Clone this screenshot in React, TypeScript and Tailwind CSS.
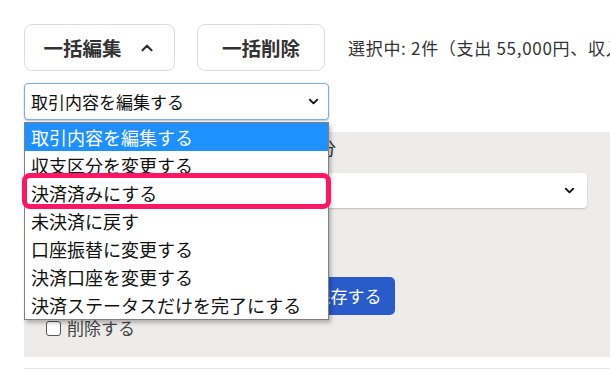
import React from 'react';
import { ChevronUp, ChevronDown } from 'lucide-react';

const FONT = '"Noto Sans CJK JP", "Noto Sans", sans-serif';

// 一括編集メニューの選択肢
const OPTIONS = [
  '取引内容を編集する',
  '収支区分を変更する',
  '決済済みにする',
  '未決済に戻す',
  '口座振替に変更する',
  '決済口座を変更する',
  '決済ステータスだけを完了にする',
];

export default function App() {
  return (
    <div
      className="relative w-[610px] h-[370px] overflow-hidden bg-white text-[#212529] pl-6 pt-6"
      style={{ fontFamily: FONT }}
    >
      {/* ボタン行 */}
      <div className="flex items-center whitespace-nowrap">
        <button className="shrink-0 flex items-center justify-center gap-[16px] w-[151px] h-[47px] border border-[#dcdcdc] rounded-[8px] bg-white text-[19.5px] font-bold text-[#333]">
          一括編集
          <ChevronUp size={18} strokeWidth={3} />
        </button>
        <button className="shrink-0 ml-[22px] w-[128px] h-[47px] border border-[#dcdcdc] rounded-[8px] bg-white text-[19.5px] font-bold text-[#333]">
          一括削除
        </button>
        <span className="shrink-0 ml-[23px] text-[17px] tracking-[0.7px] text-[#333]">選択中: 2件（支出 55,000円、収入 0円）</span>
      </div>

      {/* アクション選択 */}
      <div className="mt-3 flex items-center justify-between w-[305px] h-[37px] border border-[#7ea9ee] rounded-[4px] bg-white pl-[6px] pr-[7px] shadow-[0_1px_2px_rgba(0,0,0,0.25)]">
        <span className="text-[17px] text-[#111]">取引内容を編集する</span>
        <ChevronDown size={15} strokeWidth={3} className="text-[#111]" />
      </div>

      {/* 編集パネル */}
      <div className="mt-3 h-[225px] bg-[#edecea] pl-[22px] pr-[23px] pt-1 text-[17px] text-[#333]">
        <div className="pl-[222px] leading-6">収支区分</div>
        <div className="mt-[13px] flex items-center justify-end h-[35px] rounded-[4px] bg-white pr-[10px] shadow-[0_1px_2px_rgba(0,0,0,0.2)]">
          <ChevronDown size={15} strokeWidth={3} className="text-[#111]" />
        </div>
        <button className="mt-[69px] ml-[254px] w-[95px] h-[38px] rounded-[5px] bg-[#2a5bcb] text-white text-[17px]">
          保存する
        </button>
        <label className="mt-[1px] flex items-center gap-[6px] leading-6 text-[#444]">
          <span className="w-[15px] h-[15px] border border-[#555] rounded-[3px] bg-white" />
          削除する
        </label>
      </div>
      <div className="mt-[11px] border-t border-[#e4e4e4]" />

      {/* ネイティブのドロップダウン */}
      <div className="absolute left-6 top-[122px] w-[305px] bg-white border border-[#808080] shadow-[2px_3px_4px_rgba(0,0,0,0.25)]">
        {OPTIONS.map((opt, i) => (
          <div
            key={opt}
            className={`h-[28px] pl-[6px] flex items-center text-[18px] whitespace-nowrap ${
              i === 0 ? 'bg-[#1e90ff] text-white' : 'text-[#111]'
            }`}
          >
            {opt}
          </div>
        ))}
      </div>

      {/* 強調枠 */}
      <div className="absolute left-[22px] top-[173px] w-[309px] h-[36px] border-[5px] border-[#ff1766] rounded-[8px]" />
    </div>
  );
}
